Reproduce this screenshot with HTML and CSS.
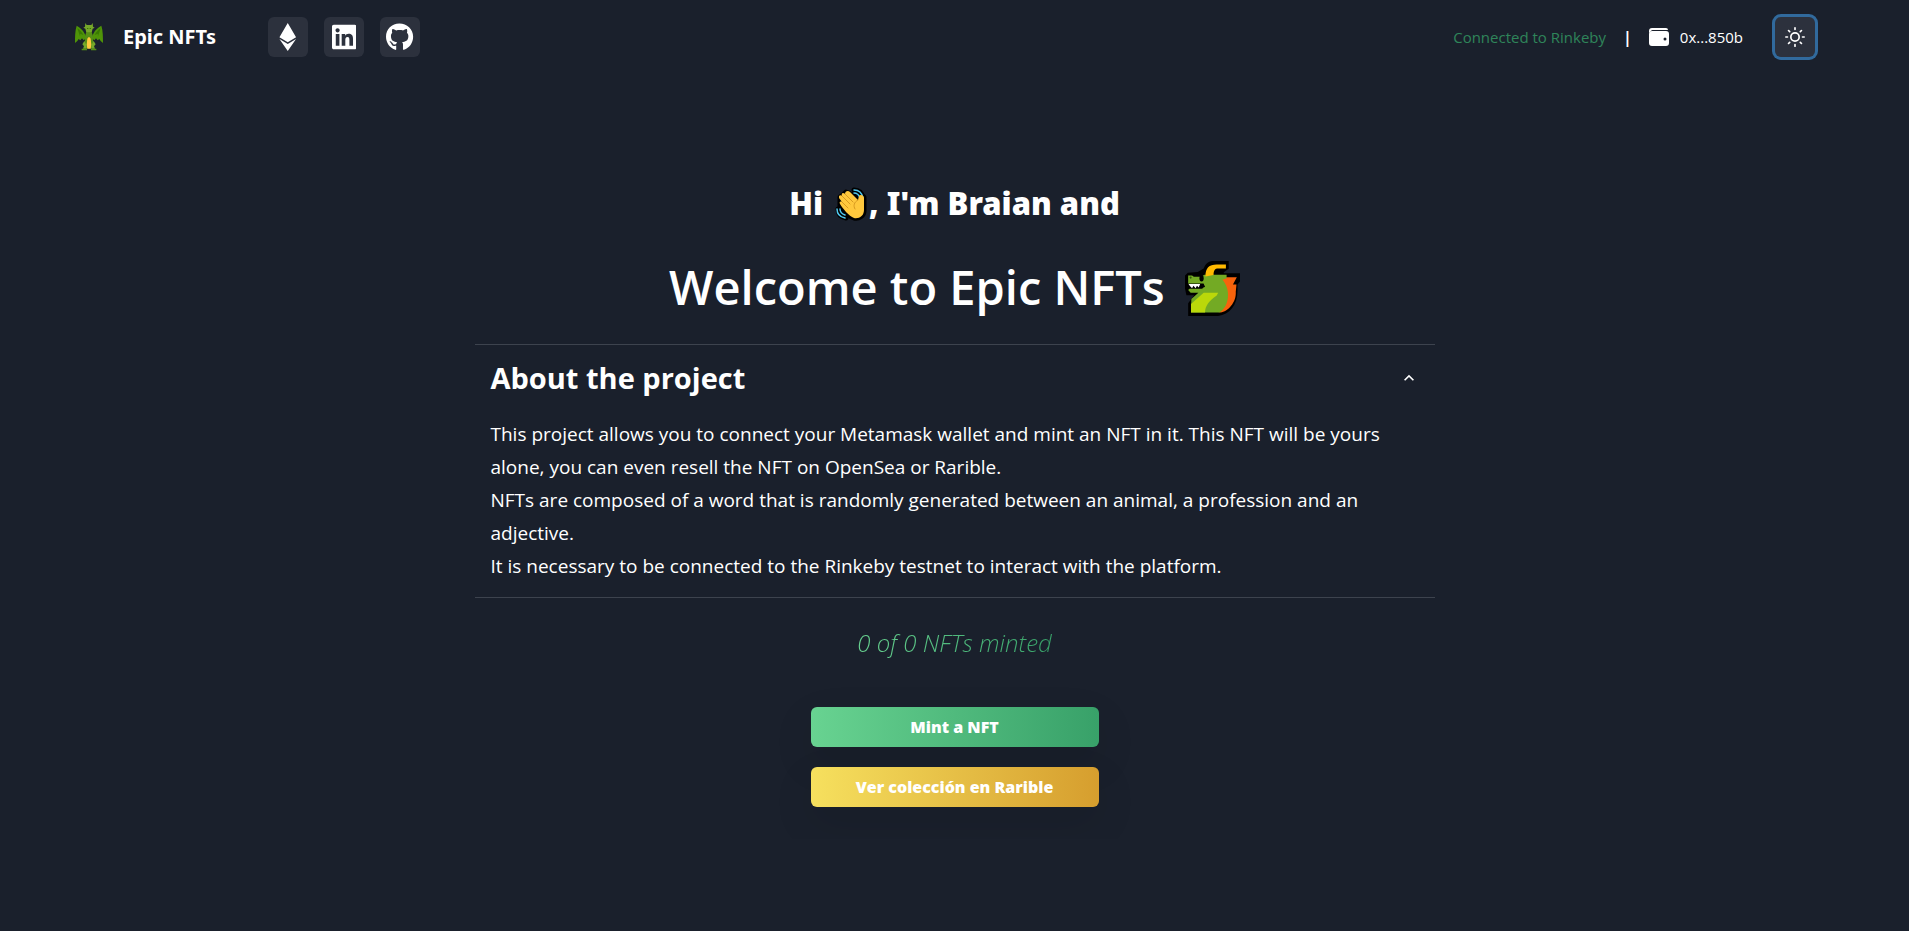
FILE: index.html
```html
<!DOCTYPE html>
<html lang="en">
<head>
<meta charset="utf-8">
<title>Epic NFTs</title>
<link rel="stylesheet" href="styles.css">
</head>
<body>
<header class="navbar">
  <a class="brand" href="#">
    <svg class="brand-logo" viewBox="0 0 84 84" aria-hidden="true">
      <path fill="#4f9408" d="M5 8c10 5 18 12 24 24l6 12-9 8-5-6-5 6-5-4-4 6-7 6c0-18 0-36 5-52zM79 8c-10 5-18 12-24 24l-6 12 9 8 5-6 5 6 5-4 4 6 7 6c0-18 0-36-5-52z"/>
      <path fill="#397903" d="M7 16c8 5 14 12 18 20l-9-4-1 8zM77 16c-8 5-14 12-18 20l9-4 1 8z"/>
      <path fill="#568f17" d="M35 24h14l4 12 1 16 5 14-6 10H31l-6-10 5-14 1-16z"/>
      <path fill="#76a82b" d="M31 0l4 6h14l4-6 1 11 5 3-6 3-3 11H34l-3-11-6-3 5-3z"/>
      <path fill="#397903" d="M36 15h4v3h-4zM44 15h4v3h-4z"/>
      <path fill="#ffc83d" d="M37 47l3-4h4l3 4 2 18-2 12H37l-2-12z"/>
      <path fill="#76a82b" d="M28 54l6 11 1 12H24l3-8-5-5zM56 54l-6 11-1 12h11l-3-8 5-5z"/>
      <path fill="#568f17" d="M20 77h16v5H20zM48 77h16v5H48z"/>
    </svg>
    <span>Epic NFTs</span>
  </a>
  <nav class="social">
    <a class="icon-button" href="#" aria-label="Etherscan">
      <svg class="social-icon" viewBox="0 0 320 512"><path d="M311.9 260.8L160 353.6 8 260.8 160 0l151.9 260.8zM160 383.4L8 290.6 160 512l152-221.4-152 92.8z"/></svg>
    </a>
    <a class="icon-button" href="#" aria-label="LinkedIn">
      <svg class="social-icon" viewBox="0 0 448 512"><path d="M416 32H31.9C14.3 32 0 46.5 0 64.3v383.4C0 465.5 14.3 480 31.9 480H416c17.6 0 32-14.5 32-32.3V64.3c0-17.8-14.4-32.3-32-32.3zM135.4 416H69V202.2h66.5V416zm-33.2-243c-21.3 0-38.5-17.3-38.5-38.5S80.9 96 102.2 96c21.2 0 38.5 17.3 38.5 38.5 0 21.3-17.2 38.5-38.5 38.5zm282.1 243h-66.4V312c0-24.8-.5-56.7-34.5-56.7-34.6 0-39.9 27-39.9 54.9V416h-66.4V202.2h63.7v29.2h.9c8.9-16.8 30.6-34.5 62.9-34.5 67.2 0 79.7 44.3 79.7 101.9V416z"/></svg>
    </a>
    <a class="icon-button" href="#" aria-label="GitHub">
      <svg class="social-icon" viewBox="0 0 496 512"><path d="M165.9 397.4c0 2-2.3 3.6-5.2 3.6-3.3.3-5.6-1.3-5.6-3.6 0-2 2.3-3.6 5.2-3.6 3-.3 5.6 1.3 5.6 3.6zm-31.1-4.5c-.7 2 1.3 4.3 4.3 4.9 2.6 1 5.6 0 6.2-2s-1.3-4.3-4.3-5.2c-2.6-.7-5.5.3-6.2 2.3zm44.2-1.7c-2.9.7-4.9 2.6-4.6 4.9.3 2 2.9 3.3 5.9 2.6 2.9-.7 4.9-2.6 4.6-4.6-.3-1.9-3-3.2-5.9-2.9zM244.8 8C106.1 8 0 113.3 0 252c0 110.9 69.8 205.8 169.5 239.2 12.8 2.3 17.3-5.6 17.3-12.1 0-6.2-.3-40.4-.3-61.4 0 0-70 15-84.7-29.8 0 0-11.4-29.1-27.8-36.6 0 0-22.9-15.7 1.6-15.4 0 0 24.9 2 38.6 25.8 21.9 38.6 58.6 27.5 72.9 20.9 2.3-16 8.8-27.1 16-33.7-55.9-6.2-112.3-14.3-112.3-110.5 0-27.5 7.6-41.3 23.6-58.9-2.6-6.5-11.1-33.3 2.6-67.9 20.9-6.5 69 27 69 27 20-5.6 41.5-8.5 62.8-8.5s42.8 2.9 62.8 8.5c0 0 48.1-33.6 69-27 13.7 34.7 5.2 61.4 2.6 67.9 16 17.7 25.8 31.5 25.8 58.9 0 96.5-58.9 104.2-114.8 110.5 9.2 7.9 17 22.9 17 46.4 0 33.7-.3 75.4-.3 83.6 0 6.5 4.6 14.4 17.3 12.1C428.2 457.8 496 362.9 496 252 496 113.3 383.5 8 244.8 8zM97.2 352.9c-1.3 1-1 3.3.7 5.2 1.6 1.6 3.9 2.3 5.2 1 1.3-1 1-3.3-.7-5.2-1.6-1.6-3.9-2.3-5.2-1z"/></svg>
    </a>
  </nav>
  <div class="account">
    <span class="network">Connected to Rinkeby</span>
    <span class="divider">|</span>
    <span class="wallet">
      <svg class="wallet-icon" viewBox="0 0 20 20" aria-hidden="true">
        <path d="M0 6V4a3 3 0 0 1 3-3h14a2 2 0 0 1 2 2H4a2 2 0 0 0-2 1z"/>
        <path fill-rule="evenodd" d="M3 4h14a3 3 0 0 1 3 3v9a3 3 0 0 1-3 3H3a3 3 0 0 1-3-3V7a3 3 0 0 1 3-3zM16 10.500a1.500 1.500 0 1 0 0 3 1.500 1.500 0 0 0 0-3z"/>
      </svg>
      <span>0x...850b</span>
    </span>
    <button class="icon-button theme-toggle" type="button" aria-label="Toggle theme">
      <svg class="sun-icon" viewBox="0 0 24 24"><circle cx="12" cy="12" r="5"/><path d="M12 1v2M12 21v2M4.220 4.220l1.420 1.420M18.360 18.360l1.420 1.420M1 12h2M21 12h2M4.220 19.780l1.420-1.420M18.360 5.640l1.420-1.420"/></svg>
    </button>
  </div>
</header>

<main class="content">
  <h2 class="greeting">Hi
    <svg class="wave" viewBox="0 0 34 34" role="img" aria-label="waving hand">
      <g fill="none" stroke="#000" stroke-width="5" stroke-linecap="round" stroke-linejoin="round">
        <path d="M19 3c5 0 8 3 9 8M19 7c3 0 5 2 6 5M3 22c0 5 3 8 8 9M7 21c0 4 2 6 5 7"/>
        <path d="M5 10l3-2 3-3 3 1 9 8 1-5 2-1 3 2v14c0 5-5 8-10 7-6-2-11-8-14-12z"/>
      </g>
      <path fill="none" stroke="#50c8ef" stroke-width="1.500" stroke-linecap="round" d="M19 3c5 0 8 3 9 8M19 6c3 0 5 2 6 5M2 22c0 5 3 8 8 9M5 22c0 4 2 5 5 6"/>
      <path fill="#ffc83d" d="M4 9c1-1 2-1 3 0-1-3 1-4 3-2 0-3 3-4 5-2l8 8 1-4c1-2 5-1 5 2v12c0 6-5 9-10 8-5-2-11-9-14-14-1-2 0-3 2-2L4 11z"/>
      <path fill="none" stroke="#d89a20" stroke-linecap="round" d="M7 9l8 8M10 7l8 8M7 15l6 6M23 13c-4 2-5 6-3 9"/>
    </svg>, I'm Braian and</h2>
  <h1 class="welcome">Welcome to Epic NFTs
    <svg class="dragon" viewBox="0 0 156 156" role="img" aria-label="dragon face">
      <path fill="#000" d="M0 41l8-8 28-2 17-10C59 5 70 0 82 0h42v22l-14 10v3h46v23l-7 9v16c0 43-23 69-55 73H9v-36l17-23H4L0 78z"/>
      <path fill="#f7630c" d="M100 46h47l-11 21 10 0-2 20c2 31-23 56-43 59l-14-3z"/>
      <path fill="#73aa24" d="M9 41h11l5 4h20l10-6h63v10l-12 4c25 27 20 76-8 93H17l1-38 20-18H16l-7-8 4-4h34l10-5-4-8H9z"/>
      <path fill="#bad80a" d="M53 90h41l-4 8c-22 15-33 30-33 48H17v-24z"/>
      <path fill="#ffb900" d="M58 44c0-24 10-34 32-34h26v11H94c-9 0-13 5-13 19z"/>
      <path fill="#000" d="M9 64h44l-3 14H9z"/>
      <path fill="#fff" d="M10 65h33l-4 10-5-5-4 7-6-7-4 7-6-6z"/>
      <ellipse fill="#000" cx="47" cy="49" rx="6" ry="9"/>
      <circle fill="#35590c" cx="16" cy="47" r="3"/>
    </svg></h1>

  <section class="accordion">
    <h3 class="accordion-heading">
      <button class="accordion-button" type="button" aria-expanded="true" aria-controls="about">
        <span>About the project</span>
        <svg class="chevron" viewBox="0 0 24 24" aria-hidden="true"><path d="M7.410 15.410L12 10.830l4.590 4.580L18 14l-6-6-6 6z"/></svg>
      </button>
    </h3>
    <div class="accordion-panel" id="about">
      <p>This project allows you to connect your Metamask wallet and mint an NFT in it. This NFT will be yours alone, you can even resell the NFT on OpenSea or Rarible.</p>
      <p>NFTs are composed of a word that is randomly generated between an animal, a profession and an adjective.</p>
      <p>It is necessary to be connected to the Rinkeby testnet to interact with the platform.</p>
    </div>
  </section>

  <p class="minted">0 of 0 NFTs minted</p>

  <div class="actions">
    <button class="action mint" type="button">Mint a NFT</button>
    <button class="action collection" type="button">Ver colección en Rarible</button>
  </div>
</main>
</body>
</html>
```

FILE: styles.css
```css
*, *::before, *::after { box-sizing: border-box; }

body {
  margin: 0;
  background: #1a202c;
  color: #fff;
  font-family: "Open Sans", "Noto Sans", sans-serif;
  font-size: 16px;
  line-height: 24px;
}

h1, h2, h3, p { margin: 0; }
a { color: inherit; text-decoration: none; }
button { border: 0; color: inherit; font: inherit; cursor: pointer; }
svg { display: block; fill: currentColor; }

.navbar {
  display: flex;
  align-items: center;
  gap: 52px;
  padding: 17px 94px 17px 75px;
}

.brand,
.greeting { font-family: "Noto Sans", "Open Sans", sans-serif; }

.brand {
  display: flex;
  align-items: center;
  gap: 20px;
  font-size: 20px;
  font-weight: 700;
}
.brand-logo { width: 28px; height: 28px; }

.social { display: flex; gap: 16px; }

.icon-button {
  display: flex;
  align-items: center;
  justify-content: center;
  width: 40px;
  height: 40px;
  padding: 0;
  border-radius: 6px;
  background: #2c313d;
}
.social-icon { height: 28px; }

.account {
  display: flex;
  align-items: center;
  margin-left: auto;
  font-size: 15px;
}
.network { color: #2f855a; }
.divider { margin: 0 17px; font-size: 16px; font-weight: 700; }
.wallet { display: flex; align-items: center; gap: 11px; }
.wallet-icon { width: 20px; height: 20px; }
.theme-toggle { margin-left: 32px; box-shadow: 0 0 0 3px #316a9d; }
.sun-icon {
  width: 20px;
  height: 20px;
  fill: none;
  stroke: currentColor;
  stroke-width: 2;
  stroke-linecap: round;
}

.content {
  display: flex;
  flex-direction: column;
  align-items: center;
  padding: 105px 16px 32px;
}

.greeting { font-size: 31px; font-weight: 900; line-height: 48px; }
.wave { display: inline-block; width: 34px; height: 34px; margin-left: 4px; vertical-align: -6px; }

.welcome { margin-top: 24px; font-size: 47px; font-weight: 600; line-height: 72px; }
.dragon { display: inline-block; width: 55px; height: 55px; margin-left: 8px; vertical-align: -11px; }

.accordion {
  width: 100%;
  max-width: 960px;
  margin-top: 21px;
  border-top: 1px solid #3d434e;
  border-bottom: 1px solid #3d434e;
}
.accordion-heading { font-size: 29px; font-weight: 700; line-height: 48px; }
.accordion-button {
  display: flex;
  align-items: center;
  justify-content: space-between;
  width: 100%;
  padding: 9px 16px;
  background: none;
  text-align: left;
}
.chevron { width: 20px; height: 20px; }
.accordion-panel { padding: 7px 16px 14px; font-size: 19px; line-height: 33px; }

.minted {
  margin-top: 27px;
  background: linear-gradient(to right, #68d391, #38a169);
  background-clip: text;
  color: transparent;
  font-size: 24px;
  font-style: italic;
  font-weight: 300;
  line-height: 36px;
}

.actions {
  display: flex;
  flex-direction: column;
  gap: 20px;
  width: 288px;
  margin-top: 46px;
}
.action {
  height: 40px;
  border-radius: 6px;
  box-shadow: 0 15px 40px rgba(0, 0, 0, .1);
  font-weight: 800;
}
.mint { background: linear-gradient(to right, #68d391, #38a169); }
.collection { background: linear-gradient(to right, #f6e05e, #d69e2e); }
```
